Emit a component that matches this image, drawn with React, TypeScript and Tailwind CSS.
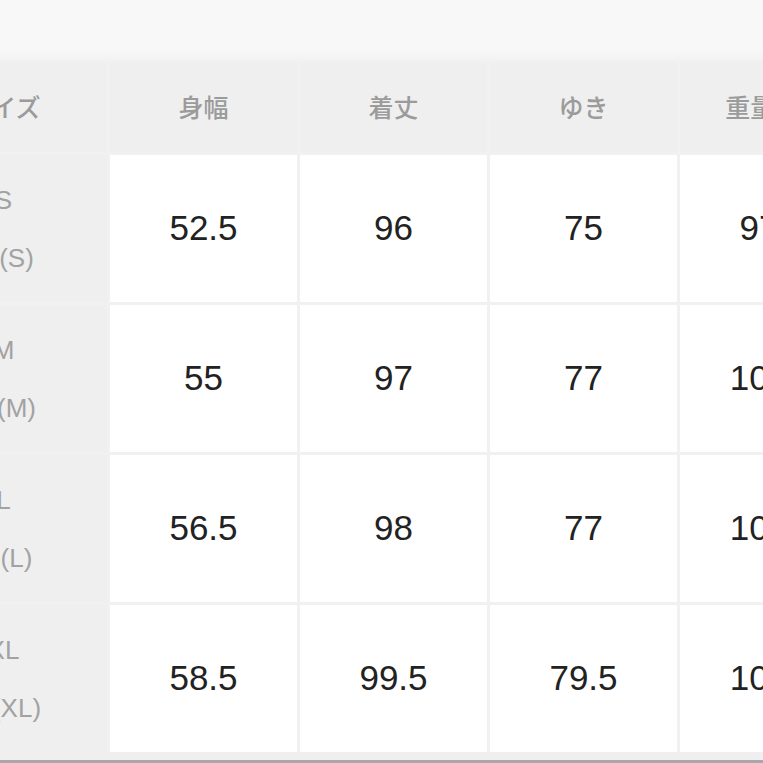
import React from "react";

const headers = ["サイズ", "身幅", "着丈", "ゆき", "重量(kg)"];
const rows = [
  { a: "S", b: "日(S)", v: ["52.5", "96", "75", "97.5"] },
  { a: "M", b: "日(M)", v: ["55", "97", "77", "101.5"] },
  { a: "L", b: "日(L)", v: ["56.5", "98", "77", "103.5"] },
  { a: "XL", b: "日(XL)", v: ["58.5", "99.5", "79.5", "106.5"] },
];

export default function App() {
  return (
    <div className="w-[763px] h-[763px] overflow-hidden bg-[#efefef] flex flex-col">
      <div className="h-[62px] shrink-0 bg-gradient-to-b from-[#f8f8f8] from-80% to-[#f1f1f1]" />
      <div className="-ml-[100px] w-max shrink-0 grid grid-cols-[207px_187px_187px_187px_187px] grid-rows-[90px_147px_147px_147px_147px] gap-[3px] bg-[#f1f1f1]">
        {headers.map((h) => (
          <div
            key={h}
            className="bg-[#efefef] flex items-center justify-center text-[25px] text-[#9b9b9b] font-['Noto_Sans_CJK_JP',sans-serif] font-medium"
          >
            {h}
          </div>
        ))}
        {rows.map((r) => (
          <React.Fragment key={r.a}>
            <div className="bg-[#efefef] flex flex-col items-center justify-center gap-[28px] text-[26px] leading-[30px] text-[#a2a2a2] font-['Liberation_Sans','Noto_Sans_CJK_JP',sans-serif]">
              <span>{r.a}</span>
              <span>{r.b}</span>
            </div>
            {r.v.map((v, i) => (
              <div
                key={i}
                className="bg-white flex items-center justify-center text-[35px] text-[#222222] font-['Liberation_Sans',sans-serif]"
              >
                {v}
              </div>
            ))}
          </React.Fragment>
        ))}
      </div>
      <div className="h-[8px] shrink-0 bg-[#efefef]" />
      <div className="h-[3px] shrink-0 bg-[#a8a8a8]" />
    </div>
  );
}
